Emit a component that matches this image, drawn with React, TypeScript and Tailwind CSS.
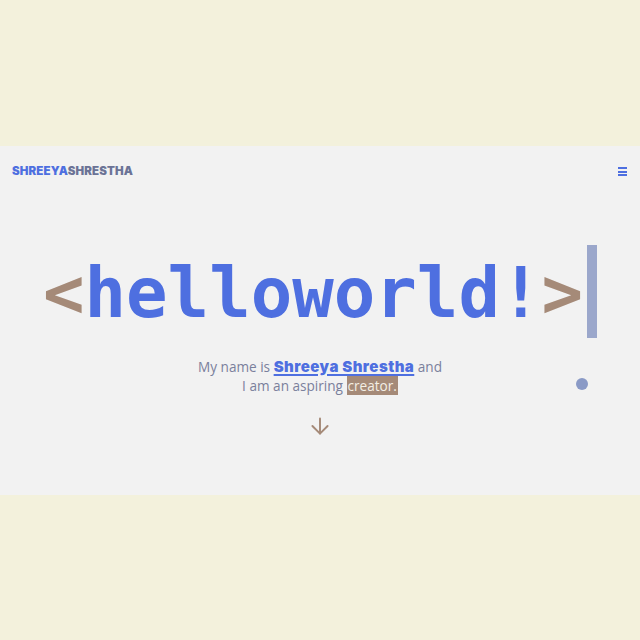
import { ArrowDown } from "lucide-react";

export default function App() {
  return (
    <div className="flex h-[640px] w-full flex-col justify-center bg-[#f3f1dc]">
      <section className="relative flex h-[349px] w-full flex-col bg-[#f2f2f2]">
        <nav className="flex h-12 items-center justify-between pl-3 pr-[11px] pt-1">
          <span
            className="text-[11.5px] font-black tracking-[0.01em]"
            style={{ fontFamily: "Inter, sans-serif" }}
          >
            <span className="text-[#4e6fe0]">SHREEYA</span>
            <span className="text-[#6b7396]">SHRESTHA</span>
          </span>
          <button className="flex flex-col gap-[1.5px] p-0.5">
            <span className="block h-[2px] w-[9px] bg-[#4e6fe0]" />
            <span className="block h-[2px] w-[9px] bg-[#4e6fe0]" />
            <span className="block h-[2px] w-[9px] bg-[#4e6fe0]" />
          </button>
        </nav>

        <div className="mt-[51px] flex items-center justify-center">
          <h1
            className="mt-[5px] text-[69px] font-bold leading-none"
            style={{ fontFamily: "'DejaVu Sans Mono', monospace" }}
          >
            <span className="text-[#a58a78]">&lt;</span>
            <span className="text-[#4e6fe0]">helloworld!</span>
            <span className="text-[#a58a78]">&gt;</span>
          </h1>
          <span className="ml-[4px] block h-[93px] w-[10px] bg-[#9ba7cb]" />
        </div>

        <p
          className="mt-[19px] text-center text-[13.6px] leading-[19px] text-[#7a809c]"
          style={{ fontFamily: "'Open Sans', sans-serif" }}
        >
          My name is{" "}
          <a
            className="text-[15px] font-black tracking-[0.03em] text-[#4e6fe0] underline decoration-[1.5px] underline-offset-2"
            style={{ fontFamily: "Inter, sans-serif" }}
          >
            Shreeya Shrestha
          </a>{" "}
          and
          <br />I am an aspiring{" "}
          <span className="bg-[#a58a78] px-px text-[#f3eee4]">creator.</span>
        </p>

        <div className="mt-[18px] flex justify-center">
          <ArrowDown className="h-[26px] w-[26px] text-[#a58a78]" strokeWidth={1.8} />
        </div>

        <span className="absolute left-[576px] top-[232px] block h-[12px] w-[12px] rounded-full bg-[#8a9ac6]" />
      </section>
    </div>
  );
}
